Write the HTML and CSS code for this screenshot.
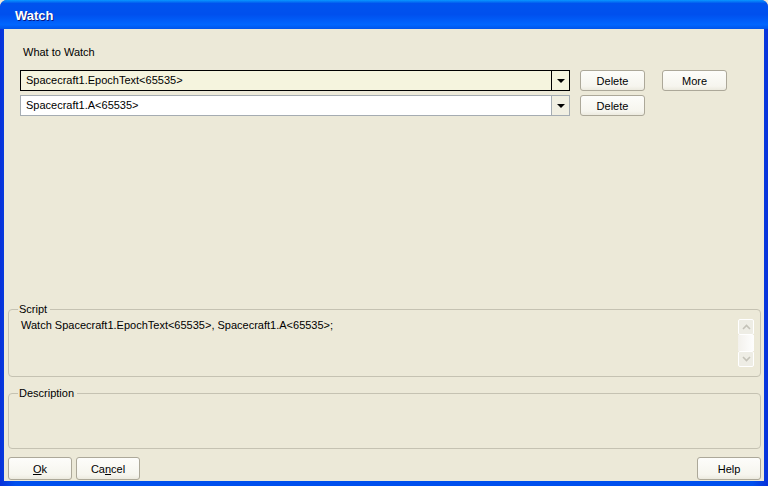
FILE: index.html
```html
<!DOCTYPE html>
<html lang="en">
<head>
    <meta charset="UTF-8">
    <title>Watch</title>
    <link rel="stylesheet" href="styles.css">
</head>
<body>
    <div class="window">
        <div class="titlebar"><span class="title">Watch</span></div>
        <div class="client">
            <div class="watch-area">
                <div class="label">What to Watch</div>
                <div class="watch-row">
                    <div class="combo focused">
                        <span class="combo-text">Spacecraft1.EpochText&lt;65535&gt;</span>
                        <span class="combo-btn"><span class="arrow"></span></span>
                    </div>
                    <button class="btn btn-delete">Delete</button>
                    <button class="btn btn-more">More</button>
                </div>
                <div class="watch-row">
                    <div class="combo">
                        <span class="combo-text">Spacecraft1.A&lt;65535&gt;</span>
                        <span class="combo-btn"><span class="arrow"></span></span>
                    </div>
                    <button class="btn btn-delete">Delete</button>
                </div>
            </div>

            <fieldset class="group script-group">
                <legend>Script</legend>
                <div class="script-text">Watch Spacecraft1.EpochText&lt;65535&gt;, Spacecraft1.A&lt;65535&gt;;</div>
                <div class="scrollbar">
                    <div class="sb-btn"><svg width="9" height="6" viewBox="0 0 9 6"><path d="M1 5 L4.5 1.5 L8 5" fill="none" stroke="#c4c2b8" stroke-width="1.6"/></svg></div>
                    <div class="sb-track"></div>
                    <div class="sb-btn"><svg width="9" height="6" viewBox="0 0 9 6"><path d="M1 1 L4.5 4.5 L8 1" fill="none" stroke="#c4c2b8" stroke-width="1.6"/></svg></div>
                </div>
            </fieldset>

            <fieldset class="group desc-group">
                <legend>Description</legend>
            </fieldset>

            <div class="footer">
                <button class="btn btn-wide"><u>O</u>k</button>
                <button class="btn btn-wide">Ca<u>n</u>cel</button>
                <span class="spacer"></span>
                <button class="btn btn-wide">Help</button>
            </div>
        </div>
    </div>
</body>
</html>
```

FILE: styles.css
```css
* { margin: 0; padding: 0; box-sizing: border-box; }
body { width: 768px; height: 486px; overflow: hidden; font-family: 'Liberation Sans', Arial, sans-serif; font-size: 11px; color: #000; background: #ece9d8; }
.window { width: 768px; height: 486px; display: flex; flex-direction: column; background: linear-gradient(90deg, #0831d9 0%, #0050ee 2%, #0050ee 98%, #0831d9 100%); border-radius: 7px 7px 0 0; }
.titlebar { height: 29px; flex: none; display: flex; align-items: center; padding-left: 15px; border-radius: 7px 7px 0 0; background: linear-gradient(180deg, #0997ff 0%, #0053ee 12%, #0050ee 50%, #0066ff 85%, #0055ea 100%); }
.title { color: #fff; font-weight: bold; font-size: 13px; text-shadow: 1px 1px 0 #0a1883; padding-top: 2px; }
.client { flex: 1; margin: 0 4px 5px 4px; background: #ece9d8; display: flex; flex-direction: column; padding: 0 3px 0 4px; }
.watch-area { flex: 1; padding: 17px 0 0 12px; }
.label { height: 13px; line-height: 13px; margin-bottom: 11px; padding-left: 3px; }
.watch-row { display: flex; align-items: center; height: 21px; margin-bottom: 4px; }
.combo { width: 550px; height: 21px; display: flex; border: 1px solid #a5acb2; background: #fff; }
.combo.focused { border-color: #000; background: #f5f4de; }
.combo-text { flex: 1; line-height: 19px; padding-left: 5px; }
.combo-btn { width: 18px; border-left: 1px solid #a5acb2; display: flex; align-items: center; justify-content: center; background: #f1efe2; }
.combo.focused .combo-btn { border-left-color: #000; background: #f5f4de; }
.arrow { width: 0; height: 0; border-left: 4px solid transparent; border-right: 4px solid transparent; border-top: 4px solid #000; }
.btn { font-family: 'Liberation Sans', Arial, sans-serif; font-size: 11px; color: #000; height: 21px; background: linear-gradient(180deg, #fdfdfa 0%, #f6f5ee 80%, #eceadf 100%); border: 1px solid #aca899; border-radius: 3px; text-align: center; }
.btn-delete { width: 65px; margin-left: 10px; }
.btn-more { width: 65px; margin-left: 17px; }
.group { border: 1px solid #c5c2b2; border-radius: 4px; padding: 0 0 0 9px; position: relative; }
.group legend { padding: 0 3px 0 1px; margin-left: 0; line-height: 13px; }
.script-group { height: 74px; margin-bottom: 10px; }
.script-text { padding: 3px 0 0 3px; }
.desc-group { height: 62px; margin-bottom: 8px; }
.scrollbar { position: absolute; right: 6px; top: 3px; width: 16px; height: 48px; display: flex; flex-direction: column; }
.sb-btn { height: 16px; border: 1px solid #fff; border-radius: 2px; background: #eeede5; display: flex; align-items: center; justify-content: center; }
.sb-track { flex: 1; background: linear-gradient(90deg, #f3f1ec 0%, #fefefe 100%); }
.footer { display: flex; height: 23px; margin-bottom: 1px; }
.btn-wide { width: 64px; height: 23px; margin-right: 4px; }
.footer .btn-wide:last-child { margin-right: 0; }
.spacer { flex: 1; }
```
